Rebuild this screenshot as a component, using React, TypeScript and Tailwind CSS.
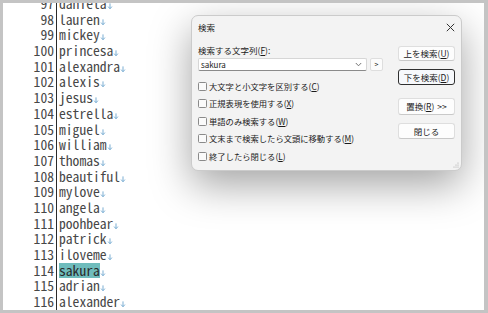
import React from "react";

const lines: [number, string][] = [
  [97, "daniela"],
  [98, "lauren"],
  [99, "mickey"],
  [100, "princesa"],
  [101, "alexandra"],
  [102, "alexis"],
  [103, "jesus"],
  [104, "estrella"],
  [105, "miguel"],
  [106, "william"],
  [107, "thomas"],
  [108, "beautiful"],
  [109, "mylove"],
  [110, "angela"],
  [111, "poohbear"],
  [112, "patrick"],
  [113, "iloveme"],
  [114, "sakura"],
  [115, "adrian"],
  [116, "alexander"],
];

const options = [
  { text: "大文字と小文字を区別する", key: "C" },
  { text: "正規表現を使用する", key: "X" },
  { text: "単語のみ検索する", key: "W" },
  { text: "文末まで検索したら文頭に移動する", key: "M" },
  { text: "終了したら閉じる", key: "L" },
];

// little blue "↓" return mark after each line
const ReturnMark = () => (
  <svg width="7" height="15.7" viewBox="0 0 7 15.7" className="inline-block align-top">
    <path d="M3 7.4V12.6" stroke="#7aaed3" strokeWidth="1" fill="none" />
    <path d="M1.1 10.6L3 12.8L4.9 10.6" stroke="#7aaed3" strokeWidth="1" fill="none" />
  </svg>
);

const DlgButton = ({
  label,
  mn,
  tail,
  focused,
  className,
}: {
  label: string;
  mn?: string;
  tail?: string;
  focused?: boolean;
  className: string;
}) => (
  <div
    className={`flex items-center justify-center rounded-[3px] text-[8.5px] leading-none text-[#1b1b1b] ${
      focused
        ? "border-[1.5px] border-[#2f2f2f] bg-[#f7f9fc]"
        : "border border-[#dedede] border-b-[#c9c9c9] bg-[#fdfdfd]"
    } ${className}`}
  >
    {label}
    {mn && (
      <span>
        (<span className="underline">{mn}</span>)
      </span>
    )}
    {tail && <span className="ml-[3px]">{tail}</span>}
  </div>
);

const FindDialog = () => (
  <div className="absolute left-[188px] top-[12px] h-[156px] w-[271px] rounded-[7px] border border-[#cbcbcb] bg-[#f3f3f3] font-['Noto_Sans_CJK_JP',sans-serif] text-[#1b1b1b] shadow-[0_14px_40px_rgba(0,0,0,0.36)]">
    {/* title bar */}
    <div className="flex h-[22px] items-center justify-between pl-[6px] pr-[6px]">
      <span className="text-[8.5px] leading-none">検索</span>
      <svg width="9" height="9" viewBox="0 0 9 9">
        <path d="M0.8 0.8L8.2 8.2M8.2 0.8L0.8 8.2" stroke="#333" strokeWidth="1" />
      </svg>
    </div>

    <div className="flex">
      {/* left column */}
      <div className="w-[198px] pl-[6px]">
        <div className="mt-[7px] h-[10px] text-[8.5px] leading-[10px]">
          検索する文字列(<span className="underline">F</span>):
        </div>
        <div className="mt-[3px] flex items-center">
          <div className="flex h-[13px] w-[169px] items-center justify-between rounded-[2px] border border-[#d6d6d6] border-b-[#8a8a8a] bg-white pl-[2px] pr-[4px]">
            <span className="text-[8px] leading-none">sakura</span>
            <svg width="7" height="5" viewBox="0 0 7 5">
              <path d="M0.8 1L3.5 3.8L6.2 1" stroke="#666" strokeWidth="0.9" fill="none" />
            </svg>
          </div>
          <div className="ml-[3px] flex h-[13px] w-[13px] items-center justify-center rounded-[2px] border border-[#dedede] bg-[#fcfcfc] text-[7px] leading-none">
            &gt;
          </div>
        </div>
        <div className="mt-[9px] flex flex-col gap-[5.5px]">
          {options.map((o) => (
            <div key={o.key} className="flex h-[12px] items-center">
              <div className="h-[9px] w-[9px] rounded-[1.5px] border border-[#8a8a8a] bg-[#fafafa]" />
              <span className="ml-[2px] whitespace-nowrap text-[8.3px] leading-none">
                {o.text}(<span className="underline">{o.key}</span>)
              </span>
            </div>
          ))}
        </div>
      </div>

      {/* right column of buttons */}
      <div className="ml-[8px] flex w-[57px] flex-col">
        <DlgButton label="上を検索" mn="U" className="mt-[8px] h-[15px]" />
        <DlgButton label="下を検索" mn="D" focused className="mt-[8px] h-[16px]" />
        <DlgButton label="置換" mn="R" tail=">>" className="mt-[13px] h-[17px]" />
        <DlgButton label="閉じる" className="mt-[8px] h-[16px]" />
      </div>
    </div>

    {/* resize grip */}
    <svg width="6" height="6" viewBox="0 0 6 6" className="absolute bottom-[2px] right-[2px]">
      <circle cx="5" cy="1" r="0.5" fill="#9a9a9a" />
      <circle cx="3" cy="3" r="0.5" fill="#9a9a9a" />
      <circle cx="5" cy="3" r="0.5" fill="#9a9a9a" />
      <circle cx="1" cy="5" r="0.5" fill="#9a9a9a" />
      <circle cx="3" cy="5" r="0.5" fill="#9a9a9a" />
      <circle cx="5" cy="5" r="0.5" fill="#9a9a9a" />
    </svg>
  </div>
);

export default function App() {
  return (
    <div className="h-[313px] w-[488px] overflow-hidden bg-[#c4c4c4] pb-[3px] pl-[3px] pr-[4px] pt-[3px]">
      <div className="relative h-full w-full overflow-hidden bg-white">
        <div className="flex h-full font-['Noto_Sans_Mono_CJK_JP','DejaVu_Sans_Mono',monospace] text-[13.6px] text-[#474747]">
          {/* line numbers */}
          <div className="h-full w-[54px] shrink-0 border-r border-[#2b2b2b] pr-[2px] text-right">
            <div className="-mt-[7px]">
              {lines.map(([n]) => (
                <div key={n} className="h-[15.7px] leading-[15.7px]">
                  {n}
                </div>
              ))}
            </div>
          </div>

          {/* text */}
          <div className="h-full pl-[2px]">
            <div className="-mt-[7px]">
              {lines.map(([n, word]) => (
                <div key={n} className="flex h-[15.7px] items-start whitespace-pre leading-[15.7px]">
                  {word === "sakura" ? (
                    <span className="bg-[#6fbcbc] text-[#2a2a2a]">{word}</span>
                  ) : (
                    <span>{word}</span>
                  )}
                  <ReturnMark />
                </div>
              ))}
            </div>
          </div>
        </div>

        <FindDialog />
      </div>
    </div>
  );
}
